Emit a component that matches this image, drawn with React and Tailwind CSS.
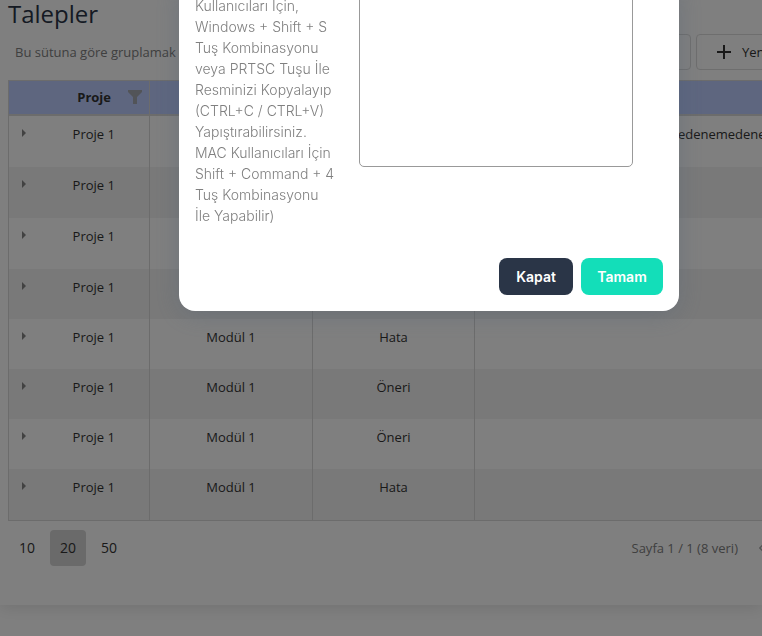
import { Fragment } from 'react';

const rows = [
  { module: '', type: '', description: 'denemedenemedenemedenemedeneme', size: 'h-[52px]' },
  { module: '', type: '', description: '', size: 'h-[51px]' },
  { module: '', type: '', description: '', size: 'h-[51px]' },
  { module: '', type: '', description: '', size: 'h-[50px]' },
  { module: 'Modül 1', type: 'Hata', description: '', size: 'h-[50px]' },
  { module: 'Modül 1', type: 'Öneri', description: '', size: 'h-[50px]' },
  { module: 'Modül 1', type: 'Öneri', description: '', size: 'h-[50px]' },
  { module: 'Modül 1', type: 'Hata', description: '', size: 'h-[52px]' },
];

const hint = [
  'Kullanıcıları İçin,',
  'Windows + Shift + S',
  'Tuş Kombinasyonu',
  'veya PRTSC Tuşu İle',
  'Resminizi Kopyalayıp',
  '(CTRL+C / CTRL+V)',
  'Yapıştırabilirsiniz.',
  'MAC Kullanıcıları İçin',
  'Shift + Command + 4',
  'Tuş Kombinasyonu',
  'İle Yapabilir)',
];

function FilterIcon() {
  return (
    <svg viewBox="0 0 16 16" className="size-4" fill="#a4a8b0" aria-hidden="true">
      <path d="M1 1h14v2l-5 5v7H6V8L1 3z" />
    </svg>
  );
}

function RequestTable() {
  return (
    <table className="w-[1038px] table-fixed border-collapse border border-[#d8d8d8] text-center">
      <colgroup>
        <col className="w-[30px]" />
        <col className="w-[111px]" />
        <col className="w-[163px]" />
        <col className="w-[162px]" />
        <col />
      </colgroup>
      <thead>
        <tr className="h-[34px] border-b-2 border-[#d8d8d8] bg-[#bccdff]">
          <th aria-label="Detay" />
          <th className="border-r border-[#d8d8d8] font-bold">
            <div className="flex items-center justify-end gap-4 pr-[6px]">
              Proje
              <button type="button" aria-label="Filtre">
                <FilterIcon />
              </button>
            </div>
          </th>
          <th aria-label="Modül" className="border-r border-[#d8d8d8]" />
          <th aria-label="Tip" className="border-r border-[#d8d8d8]" />
          <th aria-label="Açıklama" />
        </tr>
      </thead>
      <tbody>
        {rows.map((row, i) => (
          <tr key={i} className={`${row.size} align-top even:bg-[#f3f3f3]`}>
            <td className="pt-3">
              <button type="button" aria-label="Satırı genişlet" className="block pl-3">
                <svg viewBox="0 0 6 10" className="h-[10px] w-[6px]" fill="#858585" aria-hidden="true">
                  <path d="M1 1l4 4-4 4z" />
                </svg>
              </button>
            </td>
            <td className="border-r border-[#d8d8d8] pt-2">Proje 1</td>
            <td className="border-r border-[#d8d8d8] pt-2">{row.module}</td>
            <td className="border-r border-[#d8d8d8] pt-2">{row.type}</td>
            <td className="pt-2">{row.description}</td>
          </tr>
        ))}
      </tbody>
    </table>
  );
}

function ImageDialog() {
  return (
    <div className="fixed inset-0 flex items-start justify-center overflow-hidden bg-black/50 pl-24">
      <div
        role="dialog"
        aria-modal="true"
        aria-label="Resim ekle"
        className="-mt-[21px] w-[500px] rounded-2xl bg-white p-4 font-['Inter',sans-serif] shadow-[0_4px_24px_rgba(69,88,113,0.3)]"
      >
        <div className="flex items-start">
          <label htmlFor="paste" className="w-[164px] text-[14px] font-light leading-[21px] text-[#808080]">
            {hint.map((line, i) => (
              <Fragment key={i}>
                {line}
                <br />
              </Fragment>
            ))}
          </label>
          <textarea
            id="paste"
            className="block h-[172px] w-[274px] resize-none rounded-[5px] border border-[#999999] bg-white"
          />
        </div>
        <div className="mt-8 flex justify-end gap-2 text-[14px] font-semibold text-white">
          <button type="button" className="h-[37px] w-[74px] rounded-lg bg-[#2a3547]">
            Kapat
          </button>
          <button type="button" className="h-[37px] w-[82px] rounded-lg bg-[#13deb9]">
            Tamam
          </button>
        </div>
      </div>
    </div>
  );
}

export default function App() {
  return (
    <div className="min-h-screen overflow-hidden bg-white font-['Open_Sans','Noto_Sans',sans-serif] text-[13px] leading-5 text-[#333333]">
      <main className="px-2 pb-[39px] shadow-[0_2px_16px_rgba(0,0,0,0.12)]">
        <h1 className="h-[34px] text-[24px] leading-7 text-[#2a3547]">Talepler</h1>
        <div className="flex h-[46px] items-start">
          <p className="flex-1 whitespace-nowrap px-[7px] pt-2 text-[#808080]">Bu sütuna göre gruplamak</p>
          <div className="-mr-8 flex gap-[5px]">
            <button type="button" aria-label="Dışa aktar" className="h-9 w-28 rounded border border-[#dddddd]" />
            <button
              type="button"
              className="flex h-9 w-[90px] items-center gap-[10px] rounded border border-[#dddddd] pl-[19px]"
            >
              <svg viewBox="0 0 16 16" className="size-4" stroke="#333333" strokeWidth="2" aria-hidden="true">
                <path d="M8 1v14M1 8h14" />
              </svg>
              Yeni
            </button>
          </div>
        </div>
        <RequestTable />
        <div className="flex items-center pt-[9px]">
          <nav aria-label="Sayfa boyutu" className="flex gap-[5px] pl-px text-[14px]">
            <button type="button" className="h-9 w-9 rounded-sm">
              10
            </button>
            <button type="button" className="h-9 w-9 rounded-sm bg-[#d4d4d4]">
              20
            </button>
            <button type="button" className="h-9 w-9 rounded-sm">
              50
            </button>
          </nav>
          <span className="ml-auto text-[#808080]">Sayfa 1 / 1 (8 veri)</span>
          <button type="button" aria-label="Önceki sayfa" className="-mr-2 flex w-6 justify-end">
            <svg viewBox="0 0 4 8" className="h-2 w-[3px]" fill="none" stroke="#aaaaaa" strokeWidth="2" aria-hidden="true">
              <path d="M5 0L1 4l4 4" />
            </svg>
          </button>
        </div>
      </main>
      <ImageDialog />
    </div>
  );
}
